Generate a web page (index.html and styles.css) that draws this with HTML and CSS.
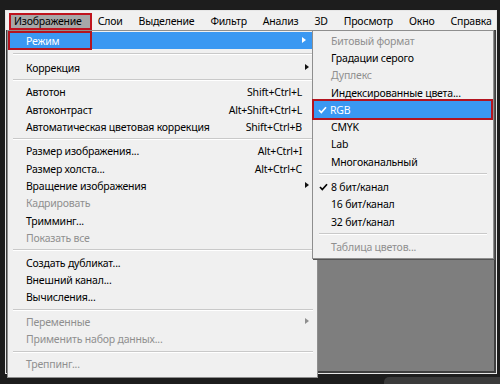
FILE: index.html
```html
<!DOCTYPE html>
<html lang="ru">
<head>
<meta charset="utf-8">
<link rel="stylesheet" href="styles.css">
</head>
<body>
<div class="screen">
  <div class="window">
    <div class="menubar">
      <span class="mb-item"><span class="mb-active">Изображение</span></span>
      <span class="mb-item">Слои</span>
      <span class="mb-item">Выделение</span>
      <span class="mb-item">Фильтр</span>
      <span class="mb-item">Анализ</span>
      <span class="mb-item">3D</span>
      <span class="mb-item">Просмотр</span>
      <span class="mb-item">Окно</span>
      <span class="mb-item">Справка</span>
    </div>
    <div class="workspace"></div>

    <div class="menu main-menu">
      <div class="row hl"><span class="label">Режим</span><span class="arrow"></span><span class="redbox"></span></div>
      <div class="sep first"></div>
      <div class="row"><span class="label">Коррекция</span><span class="arrow dark"></span></div>
      <div class="sep"></div>
      <div class="row"><span class="label">Автотон</span><span class="key">Shift+Ctrl+L</span></div>
      <div class="row"><span class="label">Автоконтраст</span><span class="key">Alt+Shift+Ctrl+L</span></div>
      <div class="row"><span class="label">Автоматическая цветовая коррекция</span><span class="key">Shift+Ctrl+B</span></div>
      <div class="sep"></div>
      <div class="row"><span class="label">Размер изображения...</span><span class="key">Alt+Ctrl+I</span></div>
      <div class="row"><span class="label">Размер холста...</span><span class="key">Alt+Ctrl+C</span></div>
      <div class="row"><span class="label">Вращение изображения</span><span class="arrow dark"></span></div>
      <div class="row off"><span class="label">Кадрировать</span></div>
      <div class="row"><span class="label">Тримминг...</span></div>
      <div class="row off"><span class="label">Показать все</span></div>
      <div class="sep"></div>
      <div class="row"><span class="label">Создать дубликат...</span></div>
      <div class="row"><span class="label">Внешний канал...</span></div>
      <div class="row"><span class="label">Вычисления...</span></div>
      <div class="sep"></div>
      <div class="row off"><span class="label">Переменные</span><span class="arrow grey"></span></div>
      <div class="row off"><span class="label">Применить набор данных...</span></div>
      <div class="sep"></div>
      <div class="row off"><span class="label">Треппинг...</span></div>
    </div>

    <div class="menu sub-menu">
      <div class="row off"><span class="label">Битовый формат</span></div>
      <div class="row"><span class="label">Градации серого</span></div>
      <div class="row off"><span class="label">Дуплекс</span></div>
      <div class="row"><span class="label">Индексированные цвета...</span></div>
      <div class="row hl boxed"><svg class="check" width="9" height="8" viewBox="0 0 9 8"><polyline points="1,4 3.3,6.5 8,1.2" fill="none" stroke="#fff" stroke-width="1.7"/></svg><span class="label">RGB</span></div>
      <div class="row"><span class="label">CMYK</span></div>
      <div class="row"><span class="label">Lab</span></div>
      <div class="row"><span class="label">Многоканальный</span></div>
      <div class="sep"></div>
      <div class="row"><svg class="check" width="9" height="8" viewBox="0 0 9 8"><polyline points="1,4 3.3,6.5 8,1.2" fill="none" stroke="#000" stroke-width="1.7"/></svg><span class="label">8 бит/канал</span></div>
      <div class="row"><span class="label">16 бит/канал</span></div>
      <div class="row"><span class="label">32 бит/канал</span></div>
      <div class="sep"></div>
      <div class="row off"><span class="label">Таблица цветов...</span></div>
    </div>
  </div>
  <div class="tab"></div>
</div>
</body>
</html>
```

FILE: styles.css
```css
html, body {
  margin: 0;
  padding: 0;
  background: #1d1d1d;
}
.screen {
  width: 500px;
  height: 384px;
  overflow: hidden;
  padding-top: 10px;
  box-sizing: border-box;
  font-family: "Noto Sans", "Open Sans", sans-serif;
  font-size: 10.5px;
  letter-spacing: -0.2px;
  color: #000;
}
.window {
  position: relative;
  margin-left: 5px;
  width: 492px;
  height: 364px;
  box-sizing: border-box;
  border: 1px solid #e6e6e6;
  display: flex;
  flex-direction: column;
  background: #f0f0f0;
}
.menubar {
  height: 19px;
  display: flex;
  align-items: center;
  background: #f0f0f0;
  padding-left: 8px;
  padding-top: 2px;
  box-sizing: border-box;
  gap: 16px;
  white-space: nowrap;
}
.mb-item {
  line-height: 15px;
}
.mb-active {
  display: inline-block;
  background: #a7a7a7;
  border: 2px solid #c0131d;
  padding: 0 8px 0 3px;
  margin-left: -5px;
  margin-right: -10px;
  line-height: 13px;
}
.workspace {
  flex: 1;
  background: #7e7e7e;
  border: 2px solid #3e3e3e;
}
.menu {
  position: absolute;
  background: #f0f0f0;
  border: 1px solid #8e8e8e;
  box-sizing: border-box;
}
.main-menu {
  left: 1px;
  top: 19px;
  width: 311px;
  height: 348px;
  padding: 1px 0 0 1px;
}
.sub-menu {
  left: 306px;
  top: 19px;
  width: 182px;
  padding: 1px 2px 2px 2px;
  box-shadow: 1px 1px 0 #555;
}
.row {
  position: relative;
  height: 17.3px;
  display: flex;
  align-items: center;
  padding: 0 15px 0 17px;
  white-space: nowrap;
}
.sub-menu .row {
  padding-left: 16px;
}
.row .label {
  flex: 1;
}
.row.off {
  color: #8f8f8f;
}
.row.hl {
  background: #3a98f2;
  color: #fff;
}
.main-menu .row.hl {
  margin-right: 3px;
}
.row.boxed {
  outline: 2px solid #b3141f;
  outline-offset: 0;
  margin: 0 0 0 -1px;
}
.redbox {
  position: absolute;
  left: -1px;
  top: -1px;
  width: 80px;
  height: 15px;
  border: 2px solid #b3141f;
}
.key {
  text-align: right;
}
.arrow {
  position: absolute;
  right: 8px;
  top: 5px;
  width: 0;
  height: 0;
  border-top: 3.5px solid transparent;
  border-bottom: 3.5px solid transparent;
  border-left: 4px solid #fff;
}
.arrow.dark { border-left-color: #111; }
.arrow.grey { border-left-color: #8f8f8f; }
.check {
  position: absolute;
  left: 4px;
  top: 5px;
}
.sep {
  height: 1px;
  margin: 2.7px 4px 2.7px 4px;
  background: #c9c9c9;
  border-bottom: 1px solid #fff;
}
.sep.first {
  margin: 3.8px 4px 3.8px 4px;
}
.sub-menu .sep {
  margin: 3px 4px 3px 4px;
}
.tab {
  margin: 3px 0 0 384px;
  height: 8px;
  background: #3a3a3a;
  border-radius: 5px 0 0 0;
}
```
